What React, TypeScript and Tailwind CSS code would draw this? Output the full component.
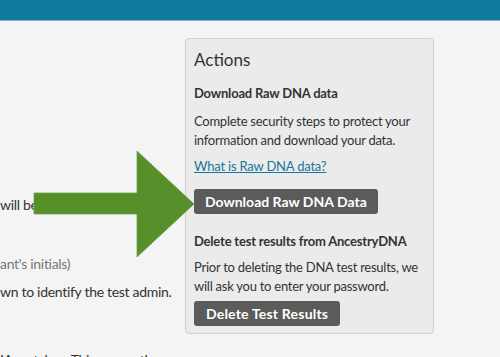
import React from "react";

export default function App() {
  return (
    <div
      className="relative w-[500px] h-[357px] overflow-hidden bg-[#f4f4f4] text-[#333]"
      style={{ fontFamily: "Lato, 'Open Sans', sans-serif" }}
    >
      <div className="h-[21px] bg-[#10799f] border-b border-[#7fb6cc]" />
      <div className="flex items-start">
        <div className="w-[185px] shrink-0 overflow-hidden text-[14px] leading-[18px] tracking-[-0.3px]">
          <div className="mt-[175px] whitespace-nowrap">will be listed</div>
          <div className="mt-[41px] whitespace-nowrap text-[#777]">ant's initials)</div>
          <div className="mt-[10px] whitespace-nowrap">wn to identify the test admin.</div>
          <div className="mt-[50px] whitespace-nowrap">IA matches. This means the</div>
        </div>
        <div className="mt-[17px] w-[249px] h-[296px] shrink-0 rounded-[4px] border border-[#cfcfcf] bg-[#ebebeb] px-[8px]">
          <div className="mt-[10px] text-[17px] leading-[22px]">Actions</div>
          <div className="mt-[13px] text-[13px] leading-[18px] font-bold tracking-[-0.2px]">Download Raw DNA data</div>
          <div className="mt-[10px] text-[13px] leading-[18.5px] tracking-[-0.25px]">
            Complete security steps to protect your information and download your data.
          </div>
          <div className="mt-[8px] text-[13px] leading-[18px] tracking-[-0.2px]">
            <a className="text-[#1b7599] underline">What is Raw DNA data?</a>
          </div>
          <button className="mt-[14px] h-[25px] px-[11px] rounded-[3px] bg-[#5b5b5b] text-white text-[14px] font-bold leading-[25px]">
            Download Raw DNA Data
          </button>
          <div className="mt-[18px] text-[13px] leading-[18px] font-bold tracking-[-0.2px]">Delete test results from AncestryDNA</div>
          <div className="mt-[8px] text-[13px] leading-[18.5px] tracking-[-0.25px]">
            Prior to deleting the DNA test results, we will ask you to enter your password.
          </div>
          <button className="mt-[6px] h-[25px] px-[12px] rounded-[3px] bg-[#5b5b5b] text-white text-[14px] font-bold leading-[25px] tracking-[0.2px]">
            Delete Test Results
          </button>
        </div>
      </div>
      <svg className="absolute left-0 top-0" width="500" height="357" viewBox="0 0 500 357">
        <polygon
          points="34,193 137,193 137,151 194,204 137,257 137,214 34,214"
          fill="#578f2a"
          stroke="#6fa348"
          strokeWidth="0.8"
        />
      </svg>
    </div>
  );
}
